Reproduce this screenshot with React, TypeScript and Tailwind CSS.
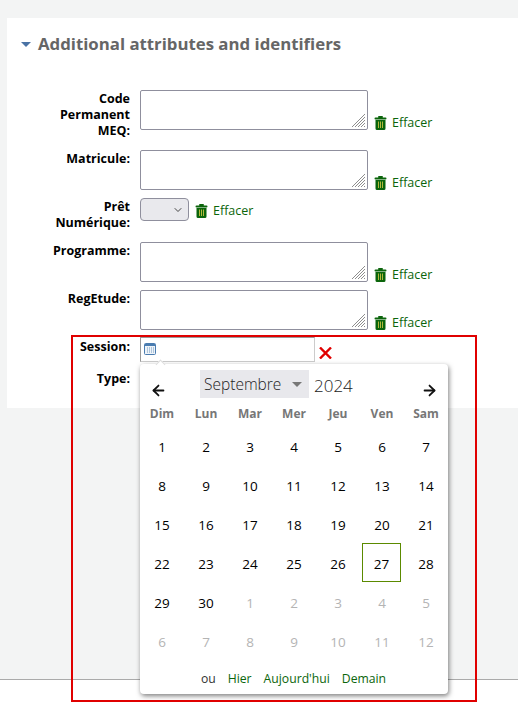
import { ArrowLeft, ArrowRight, ChevronDown } from 'lucide-react';

const weekDays = ['Dim', 'Lun', 'Mar', 'Mer', 'Jeu', 'Ven', 'Sam'];

const days = [
  1, 2, 3, 4, 5, 6, 7, 8, 9, 10, 11, 12, 13, 14, 15, 16, 17, 18, 19, 20, 21, 22, 23, 24, 25, 26, 27, 28, 29, 30,
  1, 2, 3, 4, 5, 6, 7, 8, 9, 10, 11, 12,
];

function TrashIcon() {
  return (
    <svg width="13" height="14" viewBox="0 0 13 14" className="shrink-0">
      <rect x="0.5" y="1.5" width="12" height="2" rx="1" fill="#0b650b" />
      <rect x="4" y="0" width="5" height="2" rx="1" fill="#0b650b" />
      <path d="M1.5 4h10v8.5a1.5 1.5 0 0 1-1.5 1.5H3a1.5 1.5 0 0 1-1.5-1.5z" fill="#0b650b" />
      <path d="M4.5 5.5v6.5M6.5 5.5v6.5M8.5 5.5v6.5" stroke="#b3b83c" />
    </svg>
  );
}

function Clear() {
  return (
    <a className="flex items-center gap-[5px] text-[12.5px] leading-4 text-[#0b650b]">
      <TrashIcon />
      Effacer
    </a>
  );
}

function Label({ text, top = 'pt-px' }: { text: string; top?: string }) {
  return (
    <div className="flex w-[123px] justify-end">
      <label className={`w-[80px] text-right text-[12.5px] leading-4 font-bold text-black ${top}`}>{text}</label>
    </div>
  );
}

function TextRow({ label, height }: { label: string; height: string }) {
  return (
    <div className={`flex ${height}`}>
      <Label text={label} />
      <div className="ml-[10px] flex items-start gap-[6px]">
        <div className="relative">
          <textarea className="block h-10 w-[228px] resize-none rounded-[2px] border border-[#8f8f9d] bg-white" />
          <svg width="15" height="15" viewBox="0 0 15 15" className="absolute right-[2px] bottom-[2px]">
            <path d="M1 14 14 1M4 14 14 4M7 14l7-7M10 14l4-4M13 14l1-1" stroke="#8e8e8e" fill="none" />
          </svg>
        </div>
        <div className="mt-[25px]">
          <Clear />
        </div>
      </div>
    </div>
  );
}

function CalendarIcon() {
  return (
    <svg width="12" height="12" viewBox="0 0 12 12">
      <rect x="0.5" y="0.5" width="11" height="11" rx="1" fill="#eef3f8" stroke="#4a7cb0" />
      <rect x="1" y="1" width="10" height="2" fill="#4a7cb0" />
      <path d="M3 5h7M3 7h7M3 9h7" stroke="#6f97c0" strokeDasharray="1 1" />
    </svg>
  );
}

function DatePicker() {
  return (
    <div className="absolute top-[364px] left-[140px] h-[330px] w-[308px] rounded bg-white shadow-[1px_2px_5px_rgba(0,0,0,0.5)]">
      <div className="absolute -top-[3px] left-[17px] size-[7px] rotate-45 border-t border-l border-[#ddd] bg-white" />
      <div className="flex h-[36px] items-end">
        <ArrowLeft size={17} strokeWidth={2.5} className="mb-[1px] ml-[10px] text-[#111]" />
        <div className="mt-auto mb-[2px] ml-[33px] flex h-7 w-[109px] items-center bg-[#e8e8ec] pt-px pl-1 text-[15.5px] font-light text-[#222]">
          Septembre
          <span className="ml-[11px] size-0 border-x-[5px] border-t-[5px] border-x-transparent border-t-[#777]" />
        </div>
        <span className="mb-[3px] ml-[5px] text-[17px] leading-[22px] font-light text-[#222]">2024</span>
        <ArrowRight size={17} strokeWidth={2.5} className="mb-[1px] ml-[68px] text-[#111]" />
      </div>
      <div className="mt-[6px] grid grid-cols-7">
        {weekDays.map((d) => (
          <div key={d} className="text-center text-xs leading-4 font-bold text-[#777]">
            {d}
          </div>
        ))}
      </div>
      <div className="mt-[6px] grid grid-cols-7">
        {days.map((d, i) => (
          <div key={i} className="flex h-[39px] items-center justify-center">
            <span
              className={
                'flex size-[39px] items-center justify-center text-[13.5px] ' +
                (i >= 30 ? 'text-[#b4b4b4] ' : 'text-black ') +
                (i === 26 ? 'mr-px mb-1 border border-[#5b8a00] pt-[3px]' : '')
              }
            >
              {d}
            </span>
          </div>
        ))}
      </div>
      <div className="mt-[9px] flex justify-center gap-3 pr-px text-[12.2px] leading-4 text-[#0b650b]">
        <span className="text-[#333]">ou</span>
        <a>Hier</a>
        <a>Aujourd'hui</a>
        <a>Demain</a>
      </div>
    </div>
  );
}

export default function App() {
  return (
    <div className="relative flex h-[702px] w-[518px] flex-col overflow-hidden bg-[#f3f4f4] pt-[18px] font-['Open_Sans',sans-serif]">
      <section className="ml-[7px] h-[390px] bg-white">
        <h2 className="flex h-[52px] items-center pl-[14px] text-[16.8px] leading-[52px] font-bold text-[#666]">
          <span className="mr-[7px] size-0 border-x-[5px] border-t-[5px] border-x-transparent border-t-[#4a73a5]" />
          Additional attributes and identifiers
        </h2>
        <div className="mt-5">
          <TextRow label="Code Permanent MEQ:" height="h-[60px]" />
          <TextRow label="Matricule:" height="h-12" />
          <div className="flex h-11">
            <Label text="Prêt Numérique:" />
            <div className="ml-[10px] flex h-[23px] items-center gap-[6px]">
              <div className="relative">
                <select className="block h-[23px] w-[49px] appearance-none rounded-[4px] border border-[#8f8f9d] bg-[#e9e9ed]" />
                <ChevronDown size={12} strokeWidth={2} className="absolute top-[6px] right-[5px] text-[#444]" />
              </div>
              <div className="pt-[2px]">
                <Clear />
              </div>
            </div>
          </div>
          <TextRow label="Programme:" height="h-12" />
          <TextRow label="RegEtude:" height="h-[47px]" />
          <div className="flex h-[32px]">
            <Label text="Session:" top="pt-[2px]" />
            <div className="ml-[10px] flex items-start">
              <div className="flex h-[25px] w-[175px] items-center border border-[#ccc] border-t-[#999] border-l-[#999] pb-[1px] pl-[3px]">
                <CalendarIcon />
              </div>
              <svg width="13" height="12" viewBox="0 0 13 12" className="mt-[10px] ml-[4px]">
                <path d="M1 .5 12 11.5M12 .5 1 11.5" stroke="#e00000" strokeWidth="2.4" fill="none" />
              </svg>
            </div>
          </div>
          <div className="flex">
            <Label text="Type:" top="pt-[2px]" />
          </div>
        </div>
      </section>
      <div className="flex-1" />
      <footer className="h-[23px] border-t border-[#aaa] bg-white" />
      <DatePicker />
      <div className="absolute top-[335px] left-[71px] h-[367px] w-[406px] border-2 border-[#e00000]" />
    </div>
  );
}
